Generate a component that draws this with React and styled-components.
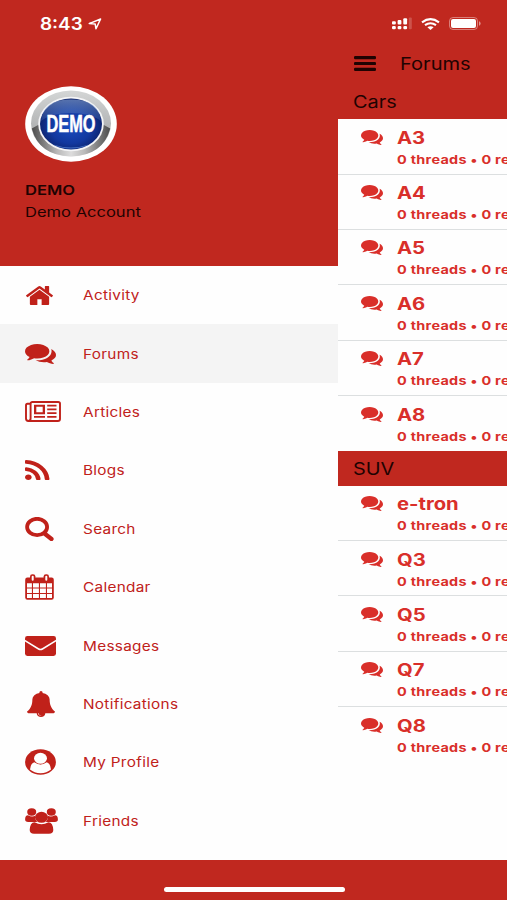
import React from 'react';
import styled, { createGlobalStyle } from 'styled-components';

const RED = '#c0281f';
const ICON_RED = '#c0211a';
const LIST_RED = '#d92f2a';
const INK = '#1f0302';

const GlobalStyle = createGlobalStyle`
  * {
    box-sizing: border-box;
  }
  body {
    margin: 0;
    font-family: Inter, 'Liberation Sans', sans-serif;
  }
`;

const Screen = styled.div`
  width: 507px;
  height: 900px;
  display: flex;
  flex-direction: column;
  overflow: hidden;
  background: ${RED};
`;

const StatusBar = styled.div`
  height: 46px;
  flex: none;
  display: flex;
  align-items: center;
  padding: 1px 26px 0 40px;
  color: #fff;
`;

const StatusIcons = styled.div`
  margin-left: auto;
  display: flex;
  align-items: center;
  gap: 9px;
`;

const Time = styled.div`
  width: 48px;
`;

// Wide lettering: every label is stretched from its left edge
const Label = styled.span`
  display: inline-block;
  white-space: nowrap;
  font-size: ${(p) => p.$size}px;
  font-weight: ${(p) => p.$weight || 400};
  line-height: ${(p) => p.$line || 20}px;
  letter-spacing: ${(p) => p.$spacing || 0}px;
  color: ${(p) => p.$color || INK};
  transform: scaleX(${(p) => p.$stretch || 1.2});
  transform-origin: left center;
`;

const Main = styled.div`
  height: 814px;
  flex: none;
  display: flex;
`;

const Drawer = styled.div`
  width: 338px;
  flex: none;
  display: flex;
  flex-direction: column;
`;

const Account = styled.div`
  height: 220px;
  flex: none;
  padding: 40px 0 0 25px;
  display: flex;
  flex-direction: column;
  align-items: flex-start;
`;

const Names = styled.div`
  margin-top: 18px;
  display: flex;
  flex-direction: column;
  gap: 2px;
`;

const Menu = styled.nav`
  flex: 1;
  background: #fefefe;
`;

const MenuItem = styled.div`
  height: 58.4px;
  display: flex;
  align-items: center;
  padding-left: 25px;
  background: ${(p) => (p.$active ? '#f4f4f4' : 'transparent')};
`;

const MenuIcon = styled.div`
  width: 58px;
  padding-left: ${(p) => p.$shift || 0}px;
  display: flex;
  align-items: center;
`;

const Content = styled.div`
  flex: 1;
  min-width: 0;
  display: flex;
  flex-direction: column;
  overflow: hidden;
`;

const TitleBar = styled.div`
  height: 35px;
  flex: none;
  display: flex;
  align-items: center;
  padding-left: 16px;
  gap: 24px;
`;

const SectionTitle = styled.div`
  height: ${(p) => p.$height}px;
  flex: none;
  display: flex;
  align-items: flex-end;
  padding: 0 0 7px 15px;
  background: ${RED};
`;

const Forums = styled.div`
  background: #fefefe;
`;

const ForumRow = styled.div`
  height: 55.35px;
  display: flex;
  padding: 8.5px 0 0 23px;
  border-bottom: 1px solid ${(p) => (p.$last ? 'transparent' : '#dcdfe0')};
`;

const ForumIcon = styled.div`
  width: 36px;
  flex: none;
  padding-top: 2px;
`;

const ForumText = styled.div`
  display: flex;
  flex-direction: column;
  align-items: flex-start;
`;

const Filler = styled.div`
  flex: 1;
  background: #fefefe;
`;

const Footer = styled.div`
  flex: 1;
  display: flex;
  justify-content: center;
  align-items: flex-start;
  padding: 27px 0 0 1px;
`;

const HomeIndicator = styled.div`
  width: 181px;
  height: 5px;
  border-radius: 3px;
  background: #fff;
`;

const Icon = ({ w, h, box, color = ICON_RED, children }) => (
  <svg
    width={w}
    height={h}
    viewBox={box || `0 0 ${w} ${h}`}
    preserveAspectRatio="none"
    fill={color}
    style={{ display: 'block' }}
  >
    {children}
  </svg>
);

const HomeIcon = () => (
  <Icon w={27} h={19} box="89 253 1614 1283">
    <path d="M1472 992v480q0 26-19 45t-45 19h-384v-384h-256v384h-384q-26 0-45-19t-19-45v-480q0-1 .5-3t.5-3l575-474 575 474q1 2 1 6zm223-69l-62 74q-8 9-21 11h-3q-13 0-21-7l-692-577-692 577q-12 8-24 7-13-2-21-11l-62-74q-8-10-7-23.5t11-21.5l719-599q32-26 76-26t76 26l244 204v-195q0-14 9-23t23-9h192q14 0 23 9t9 23v408l219 182q10 8 11 21.5t-7 23.5z" />
  </Icon>
);

const CommentsIcon = ({ w = 31, h = 20, color }) => (
  <Icon w={w} h={h} box="0 256 1792 1408" color={color}>
    <path d="M1408 768q0 139-94 257t-256.5 186.5-353.5 68.5q-86 0-176-16-124 88-278 128-36 9-86 16h-3q-11 0-20.5-8t-11.5-21q-1-3-1-6.5t.5-6.5 2-6l2.5-5 3.5-5.5 4-5 4.5-5 4-4.5q5-6 23-25t26-29.5 22.5-29 25-38.5 20.5-44q-124-72-195-177t-71-224q0-139 94-257t256.5-186.5 353.5-68.5 353.5 68.5 256.5 186.5 94 257zm384 256q0 120-71 224.5t-195 176.5q10 24 20.5 44t25 38.5 22.5 29 26 29.5 23 25q1 1 4 4.5t4.5 5 4 5 3.5 5.5l2.5 5 2 6 .5 6.5-1 6.5q-3 14-13 22t-22 7q-50-7-86-16-154-40-278-128-90 16-176 16-271 0-472-132 58 4 88 4 161 0 309-45t264-129q125-92 192-212t67-254q0-77-23-152 129 71 204 178t75 230z" />
  </Icon>
);

const NewsIcon = () => (
  <Icon w={36} h={21}>
    <path
      d="M5.6 2.8H2.400Q1 2.800 1 4.400v13.200q0 2.400 2.300 2.400 2.300 0 2.300-2.400V2.600Q5.600 1 7.400 1h25.800q1.800 0 1.800 1.600v15.400q0 2-2.200 2H3.200"
      fill="none"
      stroke={ICON_RED}
      strokeWidth="1.900"
    />
    <path d="M9 3.800h11v9.400H9zM11.300 5.700v5.600h6.400V5.700z" fillRule="evenodd" />
    <path d="M9 14.900h11v1.800H9zM22.200 3.800h9.300v1.800h-9.300zM22.200 7.500h9.300v1.800h-9.300zM22.200 11.200h9.300v1.800h-9.300zM22.200 14.900h9.300v1.800h-9.300z" />
  </Icon>
);

const RssIcon = () => (
  <Icon w={24.5} h={20} box="192 128 1408 1408">
    <path d="M576 1344q0 80-56 136t-136 56-136-56-56-136 56-136 136-56 136 56 56 136zm512 123q2 28-17 48-18 21-47 21h-135q-25 0-43-16.500t-20-41.500q-22-229-184.500-391.500t-391.500-184.500q-25-2-41.500-20t-16.500-43v-135q0-29 21-47 17-17 43-17h5q160 13 306 80.500t259 181.500q114 113 181.500 259t80.500 306zm512 2q2 27-18 47-18 20-46 20h-143q-26 0-44.500-17.500t-19.500-42.500q-12-215-101-408.500t-231.500-336-336-231.500-408.500-102q-25-1-42.500-19.500t-17.500-43.500v-143q0-28 20-46 18-18 44-18h3q262 13 501.500 120t425.500 294q187 186 294 425.500t120 501.500z" />
  </Icon>
);

const SearchIcon = () => (
  <Icon w={29} h={24}>
    <ellipse cx="12.100" cy="10" rx="10" ry="8.200" fill="none" stroke={ICON_RED} strokeWidth="3.800" />
    <path d="M19.500 16.500l7 5.500" stroke={ICON_RED} strokeWidth="4.200" strokeLinecap="round" />
  </Icon>
);

const CalendarIcon = () => (
  <Icon w={29} h={26}>
    <rect x="0.200" y="3.500" width="28.600" height="22.300" rx="2.200" />
    <path
      d="M2 9.300h4.900v4.200H2zM8 9.300h5.900v4.200H8zM15 9.300h5.900v4.200H15zM22 9.300h5v4.200h-5zM2 14.600h4.900v4.400H2zM8 14.600h5.900v4.400H8zM15 14.600h5.900v4.400H15zM22 14.600h5v4.400h-5zM2 20.100h4.900v4H2zM8 20.100h5.900v4H8zM15 20.100h5.900v4H15zM22 20.100h5v4h-5z"
      fill="#fefefe"
    />
    <rect x="5" y="0.200" width="5.400" height="7.800" rx="2.400" />
    <rect x="18.600" y="0.200" width="5.400" height="7.800" rx="2.400" />
    <rect x="6.700" y="1.700" width="2" height="5" rx="1" fill="#fefefe" />
    <rect x="20.300" y="1.700" width="2" height="5" rx="1" fill="#fefefe" />
  </Icon>
);

const EnvelopeIcon = () => (
  <Icon w={31} h={20}>
    <rect width="31" height="20" rx="2.400" />
    <path d="M-.5 4.300L13.600 13q1.900 1.200 3.800 0L31.500 4.300" fill="none" stroke="#fefefe" strokeWidth="1.500" />
  </Icon>
);

const BellIcon = () => (
  <Icon w={28} h={26} box="64 0 1664 1792">
    <path d="M912 1696q0-16-16-16-59 0-101.500-42.500t-42.500-101.500q0-16-16-16t-16 16q0 73 51.500 124.500t124.500 51.500q16 0 16-16zm816-288q0 52-38 90t-90 38h-448q0 106-75 181t-181 75-181-75-75-181h-448q-52 0-90-38t-38-90q50-42 91-88t85-119.500 74.500-158.500 50-206 19.500-260q0-152 117-282.500t307-158.500q-8-19-8-39 0-40 28-68t68-28 68 28 28 68q0 20-8 39 190 28 307 158.500t117 282.500q0 139 19.500 260t50 206 74.500 158.500 85 119.500 91 88z" />
  </Icon>
);

const ProfileIcon = () => (
  <Icon w={31} h={26}>
    <ellipse cx="15.500" cy="13" rx="15.400" ry="12.800" />
    <path d="M5 20.600q.7-7 5-7.300 5.500 3.800 11 0 4.300.3 5 7.300-4.300 3.700-10.500 3.700T5 20.600z" fill="#fefefe" />
    <ellipse cx="15.500" cy="9.300" rx="7.300" ry="6.200" />
    <ellipse cx="15.500" cy="9.300" rx="6.500" ry="5.500" fill="#fefefe" />
  </Icon>
);

const FriendsIcon = () => (
  <Icon w={33} h={26}>
    <ellipse cx="6.700" cy="4" rx="4.500" ry="3.700" />
    <ellipse cx="26.300" cy="4" rx="4.500" ry="3.700" />
    <path d="M3 7.200q3.800 2.400 7.300.6-.7 3.600 2 6.100H3.200Q0 13.900.1 11.200.2 7.200 3 7.200zM30 7.200q-3.800 2.400-7.300.6.7 3.600-2 6.100h9.100q3.200 0 3.100-2.700Q32.800 7.200 30 7.200z" />
    <ellipse cx="16.500" cy="9.300" rx="6.500" ry="5.500" />
    <path d="M9.600 14.200q6.900 4.200 13.800 0 4.600.3 4.900 7.800 0 3.700-4.300 3.700H9q-4.300 0-4.300-3.700.3-7.500 4.900-7.800z" />
  </Icon>
);

const LocationIcon = () => (
  <Icon w={14} h={12}>
    <path d="M1.200 5.600L12.600 1 8 10.800 7.200 6.100z" fill="none" stroke="#fff" strokeWidth="1.500" strokeLinejoin="round" />
  </Icon>
);

const SignalIcon = () => (
  <Icon w={20} h={13} color="#fff">
    <rect x="0" y="4.200" width="3.800" height="3.400" rx="1" />
    <rect x="5.600" y="3" width="3.800" height="4.600" rx="1" />
    <rect x="11.300" y="1.200" width="3.800" height="6.400" rx="1" />
    <rect x="0" y="9" width="3.800" height="3.300" rx="1.200" />
    <rect x="5.600" y="9" width="3.800" height="3.300" rx="1.200" />
    <rect x="11.300" y="9" width="3.800" height="3.300" rx="1.200" />
    <rect x="16.800" y="0.400" width="3" height="11.800" rx="1" opacity="0.200" />
  </Icon>
);

const WifiIcon = () => (
  <Icon w={19} h={12} color="#fff">
    <path
      d="M1 4.300q8.500-6.300 17 0M4 7.200q5.500-4 11 0"
      fill="none"
      stroke="#fff"
      strokeWidth="2.100"
    />
    <path d="M6.400 9.200q3.100-2.100 6.200 0L9.500 12z" />
  </Icon>
);

const BatteryIcon = () => (
  <Icon w={32} h={13} color="#fff">
    <rect x="0.500" y="0.500" width="28" height="12" rx="3.500" fill="none" stroke="#fff" strokeOpacity="0.400" />
    <rect x="2" y="2" width="25" height="9" rx="2" />
    <path d="M30 4.300q1.600.5 1.600 2.200T30 8.700z" opacity="0.500" />
  </Icon>
);

const BarsIcon = () => (
  <Icon w={22} h={15} color={INK}>
    <rect y="0" width="22" height="3.200" rx="1.200" />
    <rect y="5.900" width="22" height="3.200" rx="1.200" />
    <rect y="11.800" width="22" height="3.200" rx="1.200" />
  </Icon>
);

const Avatar = () => (
  <svg width="92" height="76" viewBox="0 0 92 76">
    <defs>
      <linearGradient id="ring" x1="0" y1="0" x2="0" y2="1">
        <stop offset="0" stopColor="#d4d6d6" />
        <stop offset="0.550" stopColor="#b2b4b5" />
        <stop offset="0.850" stopColor="#b9bbbb" />
        <stop offset="1" stopColor="#e9e9e9" />
      </linearGradient>
      <linearGradient id="shade" x1="0" y1="0" x2="1" y2="0">
        <stop offset="0" stopColor="#4c4c4c" />
        <stop offset="0.160" stopColor="#808080" />
        <stop offset="0.320" stopColor="#b8b8b8" />
        <stop offset="0.500" stopColor="#dcdcdc" />
        <stop offset="0.680" stopColor="#b8b8b8" />
        <stop offset="0.840" stopColor="#808080" />
        <stop offset="1" stopColor="#4c4c4c" />
      </linearGradient>
      <radialGradient id="blue" cx="0.500" cy="0.550" r="0.550">
        <stop offset="0" stopColor="#1b4cc0" />
        <stop offset="0.600" stopColor="#12389f" />
        <stop offset="1" stopColor="#0b1f63" />
      </radialGradient>
      <linearGradient id="gloss" x1="0" y1="0" x2="0" y2="1">
        <stop offset="0" stopColor="#7896cc" stopOpacity="0.700" />
        <stop offset="1" stopColor="#4a70bb" stopOpacity="0.300" />
      </linearGradient>
    </defs>
    <ellipse cx="46" cy="38" rx="45.800" ry="37.700" fill="#fff" />
    <ellipse cx="46" cy="37.500" rx="40" ry="33" fill="url(#ring)" />
    <path d="M6.800 42.500L14 38.500q4 25 32 25.500 28-.5 32-25.500l7.200 4q-7 27-39.200 28-32.200-1-39.200-28z" fill="url(#shade)" />
    <ellipse cx="46" cy="38" rx="32.800" ry="27.300" fill="#f4f5f7" />
    <ellipse cx="46" cy="38" rx="31" ry="25.500" fill="url(#blue)" />
    <path d="M16 35Q18 13.500 46 13.500T76 35Q65 27 46 27T16 35z" fill="url(#gloss)" />
    <path d="M28 58.500q18 6 36 0-8 4-18 4t-18-4z" fill="#5c8de0" opacity="0.700" />
    <text
      x="46"
      y="46"
      textAnchor="middle"
      textLength="49"
      lengthAdjust="spacingAndGlyphs"
      fontFamily="'Liberation Sans', sans-serif"
      fontWeight="700"
      fontSize="23.500"
      fill="#fff"
      stroke="#fff"
      strokeWidth="0.500"
    >
      DEMO
    </text>
  </svg>
);

const menu = [
  { label: 'Activity', icon: <HomeIcon />, shift: 1 },
  { label: 'Forums', icon: <CommentsIcon /> },
  { label: 'Articles', icon: <NewsIcon /> },
  { label: 'Blogs', icon: <RssIcon /> },
  { label: 'Search', icon: <SearchIcon /> },
  { label: 'Calendar', icon: <CalendarIcon /> },
  { label: 'Messages', icon: <EnvelopeIcon /> },
  { label: 'Notifications', icon: <BellIcon />, shift: 1.5 },
  { label: 'My Profile', icon: <ProfileIcon /> },
  { label: 'Friends', icon: <FriendsIcon /> },
];

const sections = [
  { title: 'Cars', height: 38.3, forums: ['A3', 'A4', 'A5', 'A6', 'A7', 'A8'] },
  { title: 'SUV', height: 34.3, forums: ['e-tron', 'Q3', 'Q5', 'Q7', 'Q8'] },
];

const App = () => {
  return (
    <>
      <GlobalStyle />
      <Screen>
        <StatusBar>
          <Time>
            <Label $size={17} $weight={600} $color="#fff" $stretch={1.11}>8:43</Label>
          </Time>
          <LocationIcon />
          <StatusIcons>
            <SignalIcon />
            <WifiIcon />
            <BatteryIcon />
          </StatusIcons>
        </StatusBar>
        <Main>
          <Drawer>
            <Account>
              <Avatar />
              <Names>
                <Label $size={13.5} $weight={600} $stretch={1.23}>DEMO</Label>
                <Label $size={13.5} $stretch={1.225}>Demo Account</Label>
              </Names>
            </Account>
            <Menu>
              {menu.map((item) => (
                <MenuItem key={item.label} $active={item.label === 'Forums'}>
                  <MenuIcon $shift={item.shift}>{item.icon}</MenuIcon>
                  <Label $size={13} $color={ICON_RED} $spacing={0.25} $stretch={1.18}>{item.label}</Label>
                </MenuItem>
              ))}
            </Menu>
          </Drawer>
          <Content>
            <TitleBar>
              <BarsIcon />
              <Label $size={17} $stretch={1.18}>Forums</Label>
            </TitleBar>
            {sections.map((section) => (
              <React.Fragment key={section.title}>
                <SectionTitle $height={section.height}>
                  <Label $size={17} $stretch={1.17}>{section.title}</Label>
                </SectionTitle>
                <Forums>
                  {section.forums.map((name, i) => (
                    <ForumRow key={name} $last={i === section.forums.length - 1}>
                      <ForumIcon>
                        <CommentsIcon w={22} h={15} color={LIST_RED} />
                      </ForumIcon>
                      <ForumText>
                        <Label $size={17} $weight={700} $color={LIST_RED} $line={21} $stretch={1.19}>{name}</Label>
                        <Label $size={12} $weight={700} $color={LIST_RED} $line={21} $spacing={0.25}>0 threads • 0 replies</Label>
                      </ForumText>
                    </ForumRow>
                  ))}
                </Forums>
              </React.Fragment>
            ))}
            <Filler />
          </Content>
        </Main>
        <Footer>
          <HomeIndicator />
        </Footer>
      </Screen>
    </>
  );
};

export default App;
